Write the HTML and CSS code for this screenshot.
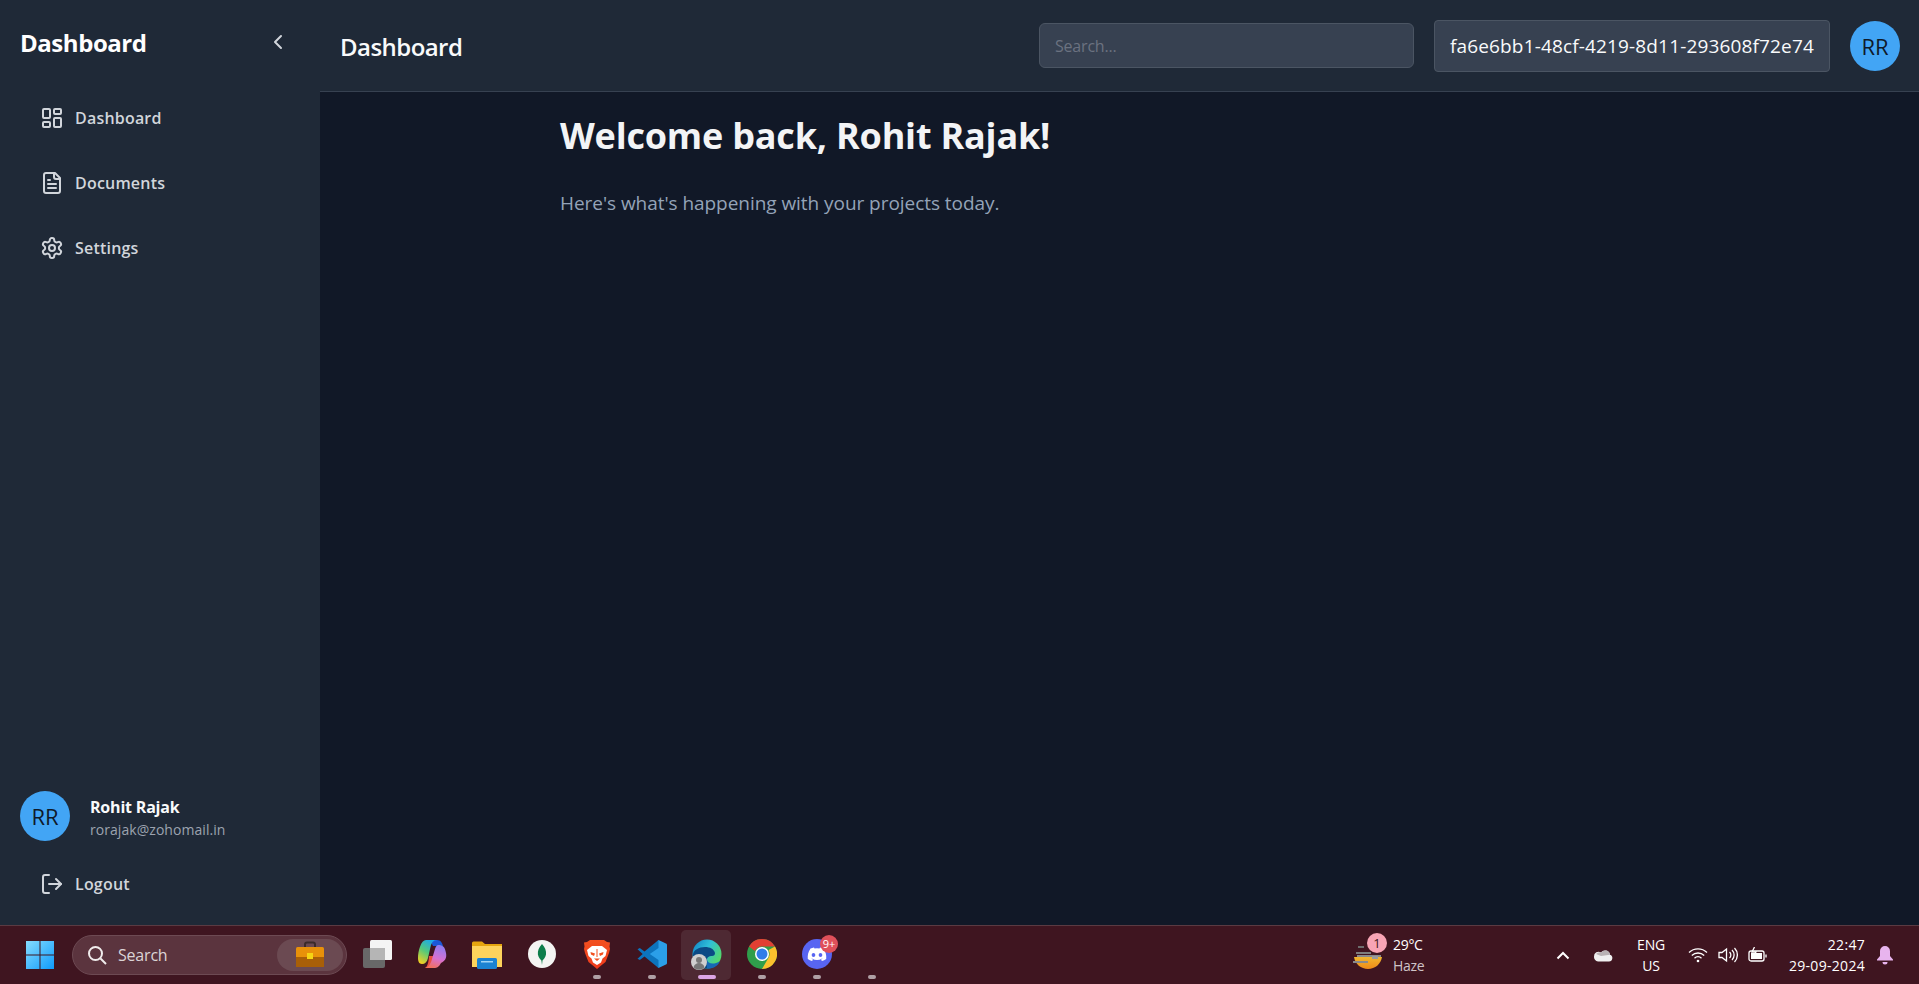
FILE: index.html
```html
<!DOCTYPE html>
<html lang="en">
<head>
<meta charset="utf-8">
<title>Dashboard</title>
<link rel="stylesheet" href="styles.css">
</head>
<body>
<div class="app">
  <aside class="sidebar">
    <div class="brand">
      <span class="brand-title">Dashboard</span>
      <svg class="chev" viewBox="0 0 24 24"><path d="m15 18-6-6 6-6"/></svg>
    </div>
    <nav class="nav">
      <a class="nav-item"><svg class="ico" viewBox="0 0 24 24"><rect x="3" y="3" width="7" height="9" rx="1"/><rect x="14" y="3" width="7" height="5" rx="1"/><rect x="14" y="12" width="7" height="9" rx="1"/><rect x="3" y="16" width="7" height="5" rx="1"/></svg><span>Dashboard</span></a>
      <a class="nav-item"><svg class="ico" viewBox="0 0 24 24"><path d="M15 2H6a2 2 0 0 0-2 2v16a2 2 0 0 0 2 2h12a2 2 0 0 0 2-2V7Z"/><path d="M14 2v4a2 2 0 0 0 2 2h4"/><path d="M10 9H8"/><path d="M16 13H8"/><path d="M16 17H8"/></svg><span>Documents</span></a>
      <a class="nav-item"><svg class="ico" viewBox="0 0 24 24"><path d="M12.22 2h-.44a2 2 0 0 0-2 2v.18a2 2 0 0 1-1 1.73l-.43.25a2 2 0 0 1-2 0l-.15-.08a2 2 0 0 0-2.73.73l-.22.38a2 2 0 0 0 .73 2.73l.15.1a2 2 0 0 1 1 1.72v.51a2 2 0 0 1-1 1.74l-.15.09a2 2 0 0 0-.73 2.73l.22.38a2 2 0 0 0 2.73.73l.15-.08a2 2 0 0 1 2 0l.43.25a2 2 0 0 1 1 1.73V20a2 2 0 0 0 2 2h.44a2 2 0 0 0 2-2v-.18a2 2 0 0 1 1-1.73l.43-.25a2 2 0 0 1 2 0l.15.08a2 2 0 0 0 2.73-.73l.22-.39a2 2 0 0 0-.73-2.73l-.15-.08a2 2 0 0 1-1-1.74v-.5a2 2 0 0 1 1-1.74l.15-.09a2 2 0 0 0 .73-2.73l-.22-.38a2 2 0 0 0-2.73-.73l-.15.08a2 2 0 0 1-2 0l-.43-.25a2 2 0 0 1-1-1.73V4a2 2 0 0 0-2-2z"/><circle cx="12" cy="12" r="3"/></svg><span>Settings</span></a>
    </nav>
    <div class="side-foot">
      <div class="user">
        <div class="avatar">RR</div>
        <div class="user-text">
          <div class="user-name">Rohit Rajak</div>
          <div class="user-mail">rorajak@zohomail.in</div>
        </div>
      </div>
      <a class="nav-item logout"><svg class="ico" viewBox="0 0 24 24"><path d="M9 21H5a2 2 0 0 1-2-2V5a2 2 0 0 1 2-2h4"/><path d="m16 17 5-5-5-5"/><path d="M21 12H9"/></svg><span>Logout</span></a>
    </div>
  </aside>
  <div class="main">
    <header class="topbar">
      <h2 class="top-title">Dashboard</h2>
      <div class="top-right">
        <input class="search" placeholder="Search...">
        <div class="uuid">fa6e6bb1-48cf-4219-8d11-293608f72e74</div>
        <div class="avatar">RR</div>
      </div>
    </header>
    <main class="content">
      <h1 class="welcome">Welcome back, Rohit Rajak!</h1>
      <p class="sub">Here's what's happening with your projects today.</p>
    </main>
  </div>
</div>
<footer class="taskbar">
  <div class="tb-left">
    <svg class="start" viewBox="0 0 30 30"><defs><linearGradient id="w" x1="0" y1="0" x2="1" y2="1"><stop offset="0" stop-color="#86dcff"/><stop offset="1" stop-color="#0f9bfb"/></linearGradient></defs><path fill="url(#w)" d="M1 1h13.500v13.500H1zM15.500 1H29v13.500H15.500zM1 15.500h13.500V29H1zM15.500 15.500H29V29H15.500z"/></svg>
    <div class="tb-search">
      <svg class="tb-mag" viewBox="0 0 20 20"><circle cx="8.500" cy="8.500" r="6.500"/><path d="m13.500 13.500 5.500 5.500"/></svg>
      <span class="tb-search-text">Search</span>
      <div class="tb-promo">
        <svg class="case" viewBox="0 0 28 28"><path d="M9 6V3.500a2 2 0 0 1 2-2h6a2 2 0 0 1 2 2V6" fill="none" stroke="#3a2a2a" stroke-width="2"/><rect y="6" width="28" height="20" rx="1.500" fill="#e8910a"/><rect y="16" width="28" height="10" fill="#a85f08"/><rect x="11" y="12" width="6" height="6" fill="#f5d414"/></svg>
      </div>
    </div>
    <div class="tiles">
      <div class="tile"><svg class="app-ico" viewBox="0 0 30 30"><rect x="1" y="9" width="22" height="20" rx="2" fill="#686868"/><rect x="8" y="1" width="22" height="20" rx="1.500" fill="#f4f4f4"/><rect x="8" y="9" width="15" height="12" fill="#b5b5b5"/></svg></div>
      <div class="tile"><svg class="app-ico" viewBox="0 0 30 30"><defs><linearGradient id="c1" x1=".7" y1="0" x2=".2" y2="1"><stop offset="0" stop-color="#1aa7ee"/><stop offset=".5" stop-color="#55c97a"/><stop offset="1" stop-color="#f5d020"/></linearGradient><linearGradient id="c2" x1=".6" y1="0" x2=".3" y2="1"><stop offset="0" stop-color="#8f7cf0"/><stop offset=".55" stop-color="#d870d0"/><stop offset="1" stop-color="#f2705a"/></linearGradient></defs><path fill="#1b58d6" d="M13 1h7c4 0 5 3 6 6H16z"/><path fill="url(#c1)" d="M9 1h11c-4 0-5.500 3-6.500 7L11 19c-1 4-3 6-6 6-3 0-4-3-4-6C1 12 4 1 9 1z"/><path fill="#e8503f" d="M12 17h9l-3 12H8c3-1 4-9 4-12z"/><path fill="url(#c2)" d="M21 6c5 0 7 2 8 8 1 5-1 8-5 10-2 4-4 5-7 5H8c4-1 6-5 7-9l3-10c1-3 2-4 3-4z"/></svg></div>
      <div class="tile"><svg class="app-ico" viewBox="0 0 30 30"><path fill="#e5a50f" d="M0 4a1.500 1.500 0 0 1 1.500-1.500H10L13 5h17v22H0z"/><path fill="#fdd35c" d="M0 7h30v21H0z"/><rect x="5" y="19" width="20" height="11" rx="1.500" fill="#1b82d2"/><rect x="9" y="22" width="12" height="1.500" fill="#9fd4f5"/></svg></div>
      <div class="tile"><svg class="app-ico" viewBox="0 0 30 30"><circle cx="15" cy="15" r="14" fill="#f4f4f2"/><path fill="#0d7d4a" d="M15 5c3 3 4.500 7 4 10.500-.5 3-2.500 5-3.500 6L15 26l-.6-4.500c-1-1-3-3-3.500-6C10.500 12 12 8 15 5z"/></svg></div>
      <div class="tile"><svg class="app-ico" viewBox="0 0 30 30"><defs><linearGradient id="b1" x1="0" y1="0" x2="0" y2="1"><stop offset="0" stop-color="#f2501f"/><stop offset="1" stop-color="#f03a1c"/></linearGradient></defs><path fill="url(#b1)" d="M8 1h14l3 2 3 .500-.500 4L28 10l-1 4-3.500 9-5 4L15 30l-3.500-3-5-4L3 14l-1-4 .5-2.500L2 3.500 5 3z"/><path fill="#fff" d="M5 11l5-4h10l5 4-1.500 6-3 2.500-1.500 4-4 2.500-4-2.500-1.500-4-3-2.500z"/><path fill="#f2501f" d="M8.500 13l4.500 1.500-1 2.500-3-1.500zM21.500 13 17 14.500l1 2.500 3-1.500zM14.500 10h1v8h-1zM12 19.500h6L15 22z"/></svg></div>
      <div class="tile"><svg class="app-ico" viewBox="0 0 30 30"><path fill="#2b9fe8" d="M21.500 1 29 4.500a1.500 1.500 0 0 1 1 1.400v18.200a1.500 1.500 0 0 1-1 1.400L21.500 29 9.500 15z"/><path fill="#0d74bd" d="M21.500 1 7.500 12.500 2.800 9 .5 10.200 5.700 15 .5 19.800 2.800 21l4.700-3.500L21.500 29V21L12.800 15 21.500 9z"/></svg></div>
      <div class="tile tile-active"><svg class="app-ico" viewBox="0 0 30 30"><defs><linearGradient id="e1" x1="0" y1="0" x2="1" y2=".6"><stop offset="0" stop-color="#0f7ec4"/><stop offset=".5" stop-color="#2fbfd8"/><stop offset="1" stop-color="#55d968"/></linearGradient></defs><circle cx="15" cy="15" r="14.500" fill="url(#e1)"/><path fill="#0b4a85" d="M1 16C1 11 7 8 13 8c5 0 9 2 10 6 0 2-1 3-3 3-3 0-5 1-5 4 0 4 5 6 9 5-3 3-7 4-11 3.500C6 28 1 23 1 16z"/><path fill="#1668b5" d="M15 21c1 4 7 5 13 1-2 5-7 8-13 7.500z"/></svg><span class="edge-user"><svg viewBox="0 0 16 16"><circle cx="8" cy="6" r="3" fill="#777"/><path d="M2.500 13.500c.5-3 3-4.500 5.500-4.500s5 1.500 5.500 4.500a8 8 0 0 1-11 0z" fill="#777"/></svg></span></div>
      <div class="tile"><svg class="app-ico" viewBox="0 0 30 30"><circle cx="15" cy="15" r="15" fill="#2f9e4b"/><path fill="#e23f33" d="M2 7.500A15 15 0 0 1 28 7.500H15a7.500 7.500 0 0 0-7 4.500z"/><path fill="#fbc02d" d="M28 7.500A15 15 0 0 1 15 30l6.500-11.300A7.500 7.500 0 0 0 21.500 11z"/><circle cx="15" cy="15" r="7" fill="#fff"/><circle cx="15" cy="15" r="5.500" fill="#2f7de9"/></svg></div>
      <div class="tile"><svg class="app-ico" viewBox="0 0 30 30"><circle cx="15" cy="15" r="15" fill="#5865f2"/><path fill="#fff" d="M21.500 9.500a14 14 0 0 0-3.500-1l-.5 1a13 13 0 0 0-5 0l-.5-1a14 14 0 0 0-3.500 1C6 13 5.500 16.500 5.800 20a14 14 0 0 0 4.300 2.100l.9-1.500-1.500-.8.400-.3a10 10 0 0 0 10.200 0l.4.300-1.500.8.900 1.500a14 14 0 0 0 4.300-2.100c.4-4-.6-7.500-2.700-10.500zM11.500 18c-1 0-1.800-.9-1.800-2s.8-2 1.800-2 1.800.9 1.800 2-.8 2-1.800 2zm7 0c-1 0-1.800-.9-1.800-2s.8-2 1.800-2 1.800.9 1.800 2-.8 2-1.800 2z"/></svg><span class="badge-nine">9+</span></div>
      <div class="tile tile-empty"></div>
    </div>
  </div>
  <div class="tb-right">
    <div class="weather">
      <svg class="wx" viewBox="0 0 29 27"><defs><linearGradient id="wg" x1="0" y1="0" x2="0" y2="1"><stop offset="0" stop-color="#f2b62e"/><stop offset="1" stop-color="#ee8a18"/></linearGradient></defs><path fill="url(#wg)" d="M1 15h28c-1 7-7 12-14 12S2 22 1 15z"/><rect x="5" y="4" width="6" height="2" fill="#6d6d6d"/><rect x="3" y="10" width="15" height="2" fill="#7d7d7d"/><rect x="4" y="13" width="24" height="2" fill="#8a8a8a"/><rect x="19" y="14" width="6" height="3" fill="#9a9a9a"/><rect x="0" y="19" width="15" height="2" fill="#8a8a8a"/></svg>
      <span class="wx-badge">1</span>
      <div class="wx-text"><div class="wx-temp">29°C</div><div class="wx-cond">Haze</div></div>
    </div>
    <svg class="tray-chev" viewBox="0 0 14 9"><path d="M1.500 7.500 7 2l5.500 5.500"/></svg>
    <svg class="tray-cloud" viewBox="0 0 20 14"><path fill="#f0f0f0" d="M5 13.500h11a3.500 3.500 0 0 0 1-6.800 5 5 0 0 0-9-2.200A4.500 4.500 0 0 0 1 8.500a4.500 4.500 0 0 0 4 5z"/><path fill="#b9b2b4" d="M3 6a5 5 0 0 1 5-1.500 5 5 0 0 1 9 2.200L8 8z"/></svg>
    <div class="lang"><div>ENG</div><div>US</div></div>
    <svg class="tray-wifi" viewBox="0 0 20 16"><path d="M1 5.500a13 13 0 0 1 18 0M3.800 8.500a9 9 0 0 1 12.400 0M6.500 11.200a5 5 0 0 1 7 0"/><circle cx="10" cy="14" r="1.300" fill="#fff" stroke="none"/></svg>
    <svg class="tray-vol" viewBox="0 0 20 16"><path d="M1 5.500h3L8.500 2v12L4 10.500H1zM11.500 5a4 4 0 0 1 0 6M14 3a7 7 0 0 1 0 10M16.500 1a10 10 0 0 1 0 14"/></svg>
    <svg class="tray-bat" viewBox="0 0 20 16"><rect x="1" y="4" width="15" height="10" rx="2"/><path d="M18 7.500v3"/><path fill="#fff" stroke="none" d="M3 6h11v6H3z"/><path d="M6.500 0 4 5h4l-2 4"/></svg>
    <div class="clock"><div>22:47</div><div>29-09-2024</div></div>
    <svg class="tray-bell" viewBox="0 0 16 19"><path d="M8 0a5 5 0 0 0-5 5v5l-3 3.500v1h16v-1L13 10V5a5 5 0 0 0-5-5z"/><path d="M5.500 16h5a2.500 2.500 0 0 1-5 0z"/></svg>
  </div>
</footer>
</body>
</html>
```
FILE: styles.css
```css
* { box-sizing: border-box; }
html, body { margin: 0; height: 100%; }
body {
  width: 1919px; height: 984px; overflow: hidden;
  display: flex; flex-direction: column;
  font-family: "Open Sans", "Noto Sans", sans-serif;
  background: #111827; color: #fff;
}
.app { display: flex; height: 925px; }
.sidebar {
  width: 320px; flex: none; background: #1f2937;
  display: flex; flex-direction: column;
  padding: 0 20px;
}
.brand { height: 84px; display: flex; align-items: center; justify-content: space-between; padding-right: 10px; }
.brand-title { font-size: 24px; font-weight: 700; letter-spacing: -.45px; color: #fff; }
.chev { width: 24px; height: 24px; fill: none; stroke: #d1d5db; stroke-width: 2; stroke-linecap: round; stroke-linejoin: round; }
.nav { display: flex; flex-direction: column; margin-top: 1px; }
.nav-item {
  height: 65px; display: flex; align-items: center; gap: 11px; padding-left: 20px;
  font-size: 16px; font-weight: 600; color: #d1d5db; letter-spacing: .2px;
}
.ico { width: 24px; height: 24px; flex: none; fill: none; stroke: #d1d5db; stroke-width: 2; stroke-linecap: round; stroke-linejoin: round; }
.side-foot { margin-top: auto; padding-bottom: 16px; }
.user { display: flex; align-items: center; gap: 20px; margin-bottom: 18px; }
.avatar {
  width: 50px; height: 50px; flex: none; border-radius: 50%;
  background: #42a5f5; color: #0f1a2a;
  display: flex; align-items: center; justify-content: center;
  font-size: 22px;
}
.user-text { padding-top: 2px; }
.user-name { font-size: 16px; font-weight: 700; letter-spacing: -.2px; line-height: 24px; color: #f9fafb; }
.user-mail { font-size: 14px; letter-spacing: .05px; line-height: 20px; margin-top: 1px; color: #9ca3af; }
.logout { height: 50px; }
.main { flex: 1; display: flex; flex-direction: column; min-width: 0; }
.topbar {
  height: 92px; flex: none; background: #1f2937; border-bottom: 1px solid #374151;
  display: flex; align-items: center; justify-content: space-between;
  padding: 0 19px 0 20px;
}
.top-title { margin: 1px 0 0; font-size: 24px; font-weight: 600; letter-spacing: -.55px; color: #f9fafb; }
.top-right { display: flex; align-items: center; gap: 20px; }
.search {
  width: 375px; height: 45px; padding: 1px 15px 0;
  background: #374151; border: 1px solid #4b5563; border-radius: 6px;
  font: 16px "Open Sans", sans-serif; color: #fff; outline: none; letter-spacing: -.2px;
}
.search::placeholder { color: #6b7280; }
.uuid {
  width: 396px; height: 52px; padding: 0 15px;
  background: #374151; border: 1px solid #4b5563; border-radius: 4px;
  display: flex; align-items: center; white-space: nowrap;
  font-size: 19px; color: #f9fafb; letter-spacing: .15px;
}
.content { flex: 1; padding: 17px 0 0 240px; }
.welcome { margin: 0; font-size: 36px; line-height: 54px; font-weight: 700; letter-spacing: -.2px; color: #f3f4f6; }
.sub { margin: 26px 0 0; font-size: 19px; line-height: 28px; color: #94a3b8; letter-spacing: -.05px; }

.taskbar {
  height: 59px; flex: none; background: #3f1520; border-top: 1px solid #5a3a42;
  display: flex; align-items: center; justify-content: space-between;
  font-family: "Open Sans", sans-serif; color: #fff;
}
.tb-left { display: flex; align-items: center; padding-left: 25px; }
.start { width: 30px; height: 30px; flex: none; }
.tb-search {
  width: 275px; height: 40px; margin-left: 17px; border-radius: 20px;
  background: #5b343e; border: 1px solid #6d4a53;
  display: flex; align-items: center; padding: 0 3px 0 14px;
}
.tb-mag { width: 20px; height: 20px; flex: none; fill: none; stroke: #f0ecec; stroke-width: 2; }
.tb-search-text { margin-left: 11px; font-size: 16px; color: #dcd4d6; letter-spacing: -.2px; }
.tb-promo {
  margin-left: auto; width: 66px; height: 32px; border-radius: 16px; background: #6b4a52;
  display: flex; align-items: center; justify-content: center;
}
.case { width: 28px; height: 28px; }
.tiles { display: flex; margin-left: 2px; }
.tile {
  position: relative; width: 55px; height: 50px; flex: none;
  display: flex; align-items: center; justify-content: center; padding-bottom: 2px;
}
.tile-active::before {
  content: ""; position: absolute; left: 2px; right: 3px; top: 0; bottom: 0;
  background: #54303a; border-radius: 5px; opacity: .75;
}
.app-ico { width: 30px; height: 30px; position: relative; }
.tile:nth-child(n+5):not(.tile-active)::after {
  content: ""; position: absolute; bottom: 1px; left: 50%; width: 8px; height: 4px; margin-left: -4px;
  border-radius: 2px; background: #b0a0a5;
}
.tile-active::after {
  content: ""; position: absolute; bottom: 1px; left: 50%; width: 18px; height: 4px; margin-left: -9px;
  border-radius: 2px; background: #dca6e6;
}
.edge-user {
  position: absolute; left: 12px; top: 24px; width: 16px; height: 16px; border-radius: 50%;
  background: #cfcfcf; display: flex;
}
.edge-user svg { width: 16px; height: 16px; }
.badge-nine {
  position: absolute; right: 6px; top: 5px; width: 18px; height: 18px; border-radius: 50%;
  background: #e0505a; font-size: 11px; line-height: 18px; text-align: center; color: #fff;
}
.tb-right { display: flex; align-items: center; height: 100%; }
.weather { display: flex; align-items: center; position: relative; width: 203px; }
.wx { width: 29px; height: 27px; flex: none; }
.wx-badge {
  position: absolute; left: 14px; top: -1px; width: 20px; height: 20px; border-radius: 50%;
  background: #f8a5b5; color: #3f1520; font-size: 13px; line-height: 20px; text-align: center;
}
.wx-text { margin-left: 11px; }
.wx-temp { font-size: 14px; line-height: 21px; letter-spacing: -.3px; }
.wx-cond { font-size: 14px; line-height: 21px; color: #cfc4c7; letter-spacing: -.3px; }
.tray-chev { width: 14px; height: 9px; fill: none; stroke: #fff; stroke-width: 2; }
.tray-cloud { width: 20px; height: 14px; margin-left: 23px; }
.lang { width: 40px; margin-left: 18px; font-size: 14px; line-height: 21px; text-align: center; letter-spacing: -.2px; }
.tray-wifi, .tray-vol, .tray-bat { width: 20px; height: 16px; fill: none; stroke: #fff; stroke-width: 1.300; }
.tray-wifi { margin-left: 17px; }
.tray-vol { margin-left: 10px; }
.tray-bat { margin-left: 10px; }
.clock { width: 84px; margin-left: 13px; font-size: 14px; line-height: 21px; text-align: right; letter-spacing: .3px; }
.tray-bell { width: 16px; height: 19px; margin-left: 12px; margin-right: 26px; fill: #e8b4ee; }
```
